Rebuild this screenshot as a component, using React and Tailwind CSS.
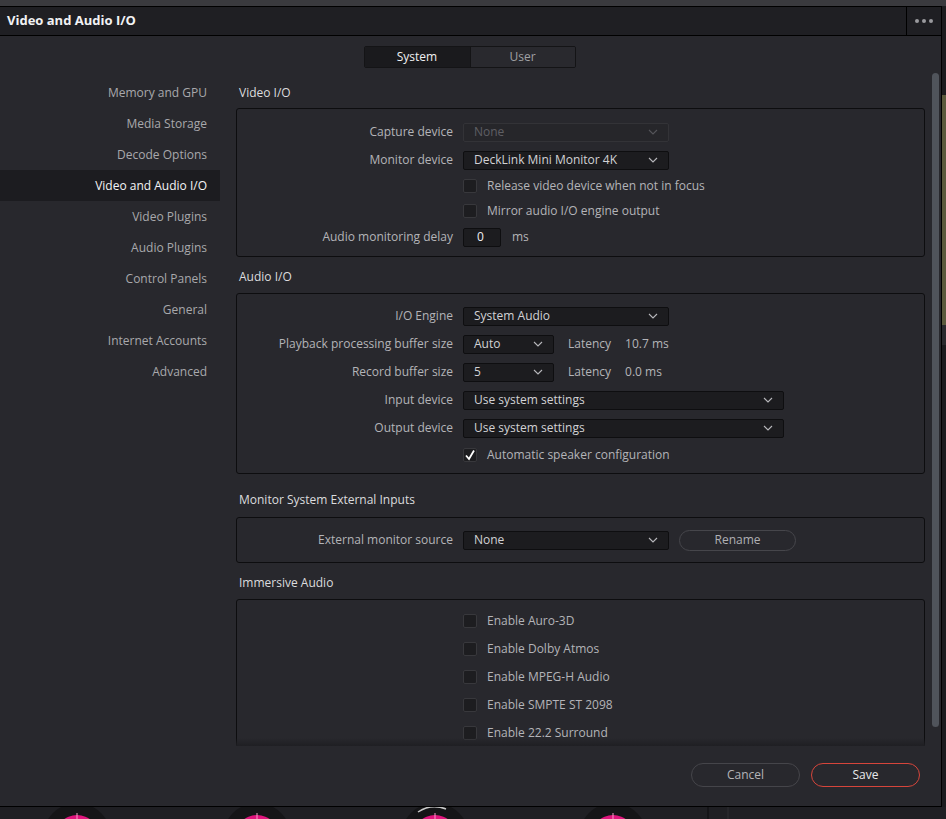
import React from 'react';

const Chevron = ({ className = 'text-[#b8b8bc]' }) => (
  <svg width="10" height="6" viewBox="0 0 10 6" className={className}>
    <polyline points="1,1 5,5 9,1" fill="none" stroke="currentColor" strokeWidth="1.1" />
  </svg>
);

const Select = ({ value, width, disabled }) => (
  <div
    className={`${width} h-[19px] flex items-center justify-between pl-[10px] pr-[10px] rounded-[2px] border ${
      disabled ? 'bg-[#26262a] border-[#333337] text-[#5f5f64]' : 'bg-[#1c1c1f] border-[#0e0e10] text-[#d2d2d5]'
    }`}
  >
    <span className="leading-none">{value}</span>
    <Chevron className={disabled ? 'text-[#55555a]' : 'text-[#b8b8bc]'} />
  </div>
);

const Checkbox = ({ checked }) => (
  <div className="w-[14px] h-[14px] rounded-[2px] bg-[#1d1d20] border border-[#38383c] flex items-center justify-center">
    {checked && (
      <svg width="12" height="12" viewBox="0 0 12 12">
        <polyline points="2,6.5 5,10 10,1.5" fill="none" stroke="#ffffff" strokeWidth="1.8" />
      </svg>
    )}
  </div>
);

const Row = ({ label, h = 'h-[28px]', children }) => (
  <div className={`grid grid-cols-[216px_1fr] gap-x-[10px] items-center ${h}`}>
    <div className="text-right text-[#b4b4b8]">{label}</div>
    <div className="flex items-center">{children}</div>
  </div>
);

const CheckRow = ({ label, checked, h = 'h-[25px]' }) => (
  <Row label="" h={h}>
    <Checkbox checked={checked} />
    <span className="ml-[10px] text-[#b4b4b8]">{label}</span>
  </Row>
);

const Header = ({ title, h = 'h-[36px]', pt = 'pt-[12px]' }) => (
  <div className={`${h} ${pt} pl-[3px] text-[#dcdcde] leading-4`}>{title}</div>
);

const Box = ({ children, pt = 'pt-[8px]', pb = 'pb-[5px]' }) => (
  <div className={`border border-[#0d0d0f] rounded-[3px] ${pt} ${pb}`}>{children}</div>
);

const sidebar = [
  'Memory and GPU',
  'Media Storage',
  'Decode Options',
  'Video and Audio I/O',
  'Video Plugins',
  'Audio Plugins',
  'Control Panels',
  'General',
  'Internet Accounts',
  'Advanced',
];

export default function App() {
  return (
    <div className="w-[946px] h-[819px] overflow-hidden bg-[#1e1e22] font-['Open_Sans','Noto_Sans',sans-serif] text-[12px]">
      <div className="h-[6px] bg-[#3a3a3e]" />
      <div className="flex">
        {/* dialog */}
        <div className="w-[941px] flex flex-col bg-[#28282d] border-t border-b border-black">
          <div className="h-[28px] flex items-center bg-[#1f1f23]">
            <div className="flex-1 pl-[7px] text-[13px] font-bold text-[#f2f2f4]">Video and Audio I/O</div>
            <div className="w-[35px] h-full border-l border-black flex items-center justify-center gap-[3px]">
              <span className="w-[4px] h-[4px] rounded-full bg-[#9a9a9e]" />
              <span className="w-[4px] h-[4px] rounded-full bg-[#9a9a9e]" />
              <span className="w-[4px] h-[4px] rounded-full bg-[#9a9a9e]" />
            </div>
          </div>
          <div className="h-px bg-black" />

          <div className="pt-[10px] pr-[2px] flex justify-center">
            <div className="flex h-[22px] border border-[#141416] rounded-[2px] overflow-hidden">
              <div className="w-[105px] flex items-center justify-center bg-[#1a1a1d] text-[#f0f0f2]">System</div>
              <div className="w-[105px] flex items-center justify-center bg-[#29292e] border-l border-[#141416] text-[#a0a0a4]">User</div>
            </div>
          </div>

          <div className="mt-[9px] h-[669px] flex">
            <div className="w-[220px] flex flex-col">
              {sidebar.map((s) => (
                <div
                  key={s}
                  className={`h-[31px] flex items-center justify-end pr-[13px] ${
                    s === 'Video and Audio I/O' ? 'bg-[#1c1c20] text-[#f4f4f6]' : 'text-[#a8a8ac]'
                  }`}
                >
                  {s}
                </div>
              ))}
            </div>

            <div className="relative w-[689px] ml-[16px] overflow-hidden">
              <Header title="Video I/O" h="h-[31px]" pt="pt-[8px]" />
              <Box pt="pt-[9px]" pb="pb-[5px]">
                <Row label="Capture device">
                  <Select value="None" width="w-[206px]" disabled />
                </Row>
                <Row label="Monitor device">
                  <Select value="DeckLink Mini Monitor 4K" width="w-[206px]" />
                </Row>
                <CheckRow label="Release video device when not in focus" h="h-[24px]" />
                <CheckRow label="Mirror audio I/O engine output" />
                <Row label="Audio monitoring delay">
                  <div className="w-[38px] h-[19px] bg-[#1c1c1f] border border-[#0e0e10] rounded-[2px] flex items-center pl-[13px] text-[#f0f0f2]">0</div>
                  <span className="ml-[11px] text-[#b4b4b8]">ms</span>
                </Row>
              </Box>

              <Header title="Audio I/O" />
              <Box pt="pt-[8px]" pb="pb-[6px]">
                <Row label="I/O Engine">
                  <Select value="System Audio" width="w-[206px]" />
                </Row>
                <Row label="Playback processing buffer size">
                  <Select value="Auto" width="w-[91px]" />
                  <span className="ml-[14px] text-[#b4b4b8]">Latency</span>
                  <span className="ml-[14px] text-[#b4b4b8]">10.7 ms</span>
                </Row>
                <Row label="Record buffer size">
                  <Select value="5" width="w-[91px]" />
                  <span className="ml-[14px] text-[#b4b4b8]">Latency</span>
                  <span className="ml-[14px] text-[#b4b4b8]">0.0 ms</span>
                </Row>
                <Row label="Input device">
                  <Select value="Use system settings" width="w-[321px]" />
                </Row>
                <Row label="Output device">
                  <Select value="Use system settings" width="w-[321px]" />
                </Row>
                <CheckRow label="Automatic speaker configuration" checked />
              </Box>

              <Header title="Monitor System External Inputs" h="h-[43px]" pt="pt-[18px]" />
              <Box pt="pt-[8px]" pb="pb-[8px]">
                <Row label="External monitor source">
                  <Select value="None" width="w-[206px]" />
                  <div className="ml-[10px] w-[117px] h-[21px] rounded-full border border-[#46464b] flex items-center justify-center text-[#b0b0b4]">
                    Rename
                  </div>
                </Row>
              </Box>

              <Header title="Immersive Audio" />
              <Box pt="pt-[7px]" pb="pb-[6px]">
                <CheckRow label="Enable Auro-3D" h="h-[28px]" />
                <CheckRow label="Enable Dolby Atmos" h="h-[28px]" />
                <CheckRow label="Enable MPEG-H Audio" h="h-[28px]" />
                <CheckRow label="Enable SMPTE ST 2098" h="h-[28px]" />
                <CheckRow label="Enable 22.2 Surround" h="h-[28px]" />
              </Box>

              <div className="absolute left-0 right-0 bottom-0 h-[8px] bg-gradient-to-b from-transparent to-[#1f1f23]" />
            </div>

            <div className="ml-[7px] -mt-[4px] w-[7px] h-[654px] rounded-full bg-[#50545b]" />
          </div>

          <div className="h-[60px] flex items-start justify-end pt-[17px] pr-[21px] gap-[11px]">
            <div className="w-[109px] h-[24px] rounded-full border border-[#45454a] flex items-center justify-center text-[#b4b4b8]">
              Cancel
            </div>
            <div className="w-[109px] h-[24px] rounded-full border border-[#d6453b] flex items-center justify-center text-[#e8e8ea]">
              Save
            </div>
          </div>
        </div>

        {/* background app, right edge */}
        <div className="w-[5px] flex flex-col bg-[#1c1c1f] border-l border-black">
          <div className="h-[89px]" />
          <div className="h-[230px] bg-[#5b5a3d]" />
          <div className="h-[20px] bg-[#2a2a2e]" />
        </div>
      </div>

      {/* background app, bottom edge */}
      <svg width="946" height="12" className="block bg-[#1f1f23]">
        {[77, 257, 435, 613].map((cx) => (
          <g key={cx}>
            <circle cx={cx} cy="30" r="34" fill="#151517" />
            <circle cx={cx} cy="30" r="22" fill="#e0157d" />
            <line x1={cx} y1="6" x2={cx} y2="12" stroke="#f4a0c8" strokeWidth="1" />
          </g>
        ))}
        <path d="M418 5 A 30 30 0 0 1 446 2" fill="none" stroke="#c8c8c8" strokeWidth="1.5" />
        <line x1="708" y1="0" x2="708" y2="12" stroke="#0c0c0e" />
        <line x1="728" y1="0" x2="728" y2="12" stroke="#2e2e33" />
      </svg>
    </div>
  );
}
